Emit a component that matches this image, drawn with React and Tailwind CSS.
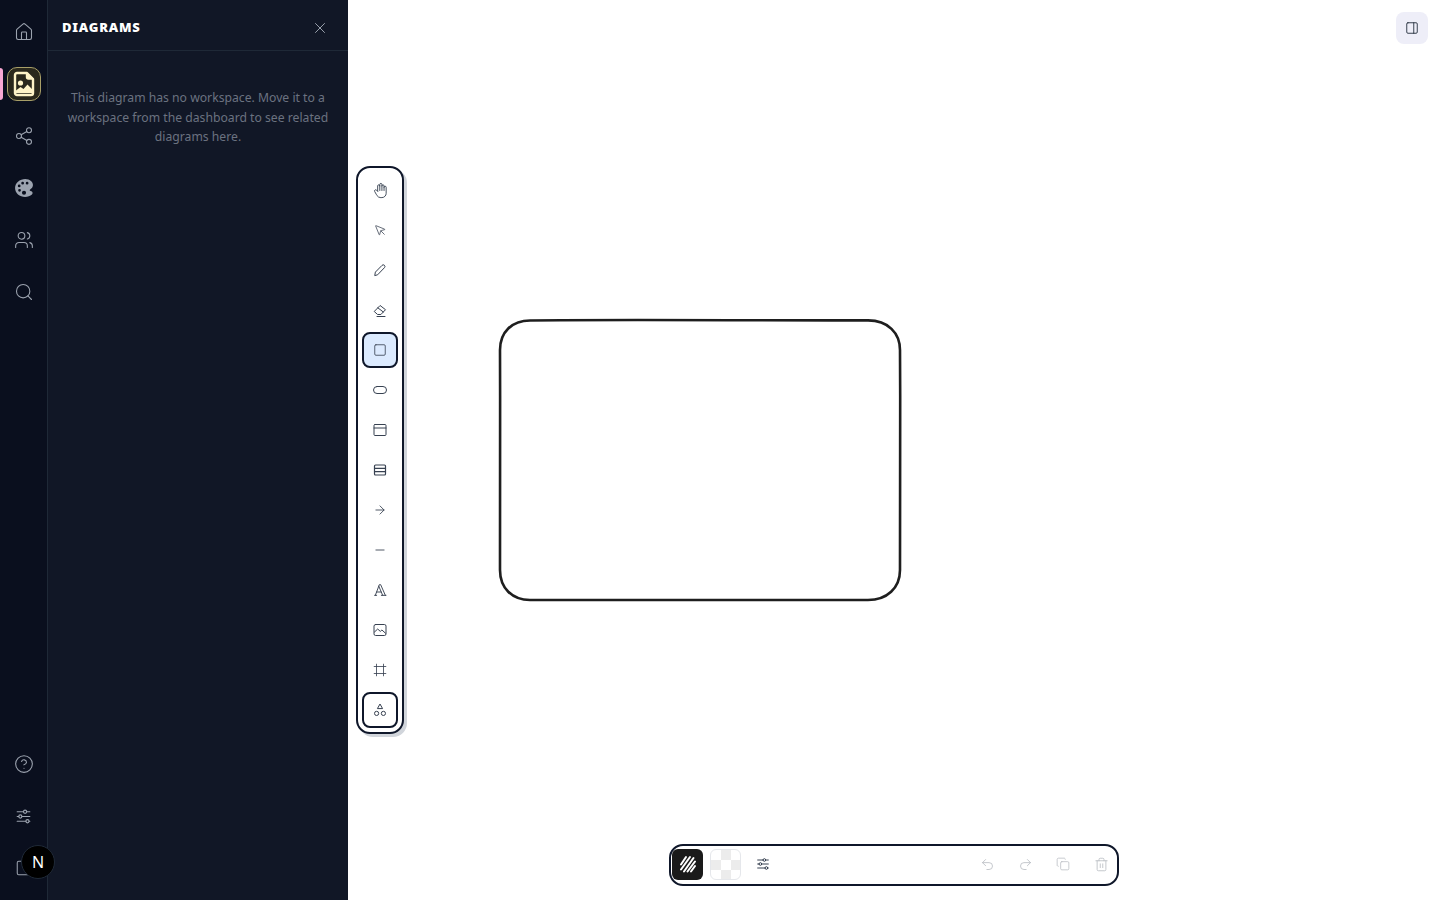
import React from "react";
import { Home, Share2, Users, Search, CircleHelp, X, PanelRight, MousePointer, Square, ArrowRight, Minus, Frame, Undo2, Redo2, Copy, Trash2 } from "lucide-react";
import { IoColorPalette } from "react-icons/io5";
import { TbTypography, TbHandStop, TbAdjustmentsHorizontal } from "react-icons/tb";

function RailButton({ children }) {
  return <div className="flex h-[52px] w-full items-center justify-center text-[#9ca3af]">{children}</div>;
}

function FileIcon() {
  return (
    <svg width="22" height="26" viewBox="0 0 22 26">
      <path d="M4 2h10l6 6v14a2 2 0 0 1-2 2H4a2 2 0 0 1-2-2V4a2 2 0 0 1 2-2z" fill="#2a281c" stroke="#fef3c7" strokeWidth="2.4" strokeLinejoin="round" />
      <path d="M13.5 2v4a2 2 0 0 0 2 2H20z" fill="#fef3c7" stroke="#fef3c7" strokeWidth="1.4" strokeLinejoin="round" />
      <circle cx="7.5" cy="12" r="2.6" fill="#fef3c7" />
      <path d="M3 22v-2.5l4.5-3.5 3 2 4-4.5 4.5 4.5V22z" fill="#fef3c7" />
    </svg>
  );
}

const s = { width: 16, height: 16, viewBox: "0 0 16 16", fill: "none", stroke: "currentColor", strokeWidth: 1, strokeLinejoin: "round", strokeLinecap: "round" };

function PencilIcon() {
  return (
    <svg {...s}>
      <path d="M2.8 13.2l.6-3.1L10 3.4a1.6 1.6 0 0 1 2.5 2.2L5.9 12.5z" />
    </svg>
  );
}
function EraserIcon() {
  return (
    <svg {...s}>
      <path d="M2.5 9.2l5.6-5.7 5.4 4.2-4.6 4.8H6z" />
      <path d="M5.8 5.8l5.5 4.2" />
      <path d="M5 14.5h8" />
    </svg>
  );
}
function Oblong() {
  return (
    <svg {...s}>
      <rect x="1.5" y="4.5" width="13" height="7" rx="3.5" />
    </svg>
  );
}
function WindowIcon() {
  return (
    <svg {...s}>
      <rect x="2" y="2.5" width="12" height="11" rx="1" />
      <path d="M2 6h12" />
    </svg>
  );
}
function RowsIcon() {
  return (
    <svg {...s} strokeWidth="1.2">
      <rect x="2.5" y="3" width="11" height="10" rx="1" />
      <path d="M2.5 6.4h11M2.5 9.7h11" />
    </svg>
  );
}
function PhotoIcon() {
  return (
    <svg {...s}>
      <rect x="2" y="2.5" width="12" height="11" rx="1.6" />
      <path d="M2.5 10l3.2-3 2.6 2.4 1.6-1.4 3.6 3.2" />
    </svg>
  );
}
function ShapesIcon() {
  return (
    <svg width="14" height="14" viewBox="0 0 14 14" fill="none" stroke="currentColor" strokeWidth="1">
      <path d="M7 1l2.6 4.6H4.4z" strokeLinejoin="round" />
      <circle cx="3.6" cy="10.4" r="2.1" />
      <circle cx="10.4" cy="10.4" r="2.1" />
    </svg>
  );
}

function Tool({ children, active, outlined }) {
  const tone = active
    ? "border-2 border-[#0f172a] bg-[#dbeafe] rounded-lg"
    : outlined
    ? "border-2 border-[#0f172a] bg-white rounded-lg"
    : "";
  return <div className={`flex h-9 w-9 items-center justify-center text-[#374151] ${tone}`}>{children}</div>;
}

const checker = {
  backgroundImage:
    "linear-gradient(45deg,#ececec 25%,transparent 25%,transparent 75%,#ececec 75%),linear-gradient(45deg,#ececec 25%,transparent 25%,transparent 75%,#ececec 75%)",
  backgroundSize: "20px 20px",
  backgroundPosition: "0 0,10px 10px",
};

export default function App() {
  return (
    <div className="flex h-[900px] w-[1440px] overflow-hidden bg-white font-['Noto_Sans',sans-serif]">
      <aside className="relative flex w-[48px] shrink-0 flex-col items-center border-r border-[#1f2937] bg-[#0a0f1e] pb-[6px] pt-[6px]">
        <RailButton><Home size={20} strokeWidth={1.3} /></RailButton>
        <div className="relative flex h-[52px] w-full items-center justify-center">
          <span className="absolute left-0 top-[10px] h-[32px] w-[3px] rounded-r bg-[#f9a8d4]" />
          <div className="flex h-[34px] w-[34px] items-center justify-center rounded-[10px] border border-[#a89f68] bg-[#2a281c]">
            <FileIcon />
          </div>
        </div>
        <RailButton><Share2 size={20} strokeWidth={1.3} /></RailButton>
        <RailButton><IoColorPalette size={22} /></RailButton>
        <RailButton><Users size={20} strokeWidth={1.3} /></RailButton>
        <RailButton><Search size={20} strokeWidth={1.3} /></RailButton>
        <div className="mt-auto flex w-full flex-col">
          <RailButton><CircleHelp size={20} strokeWidth={1.3} /></RailButton>
          <RailButton><TbAdjustmentsHorizontal size={19} strokeWidth={1.4} /></RailButton>
          <RailButton><Square size={18} strokeWidth={1.4} /></RailButton>
        </div>
        <div className="absolute left-[21px] top-[845px] z-10 flex h-[34px] w-[34px] items-center justify-center rounded-full border border-[#1f2937] bg-black text-[16px] font-normal text-white">N</div>
      </aside>

      <section className="flex w-[300px] shrink-0 flex-col bg-[#111726]">
        <header className="flex h-[51px] items-center justify-between border-b border-[#1f2937] pl-[14px] pr-[19px] pt-[5px]">
          <h2 className="text-[13px] font-black tracking-[0.06em] text-white">DIAGRAMS</h2>
          <X size={18} strokeWidth={1.3} className="text-[#9ca3af]" />
        </header>
        <p className="px-[16px] pt-[37px] text-center text-[12.2px] leading-[19.5px] text-[#6b7280]">
          This diagram has no workspace. Move it to a workspace from the dashboard to see related diagrams here.
        </p>
      </section>

      <main className="relative flex-1 bg-white">
        <div className="absolute right-[12px] top-[12px] flex h-8 w-8 items-center justify-center rounded-lg bg-[#eeeef8] text-[#1f2937]">
          <PanelRight size={14} strokeWidth={1.5} />
        </div>

        <svg className="absolute left-[148px] top-[316px]" width="408" height="288" viewBox="0 0 408 288" fill="none">
          <path d="M34 4.5C120 3.4 280 4.6 372 4.4C392 4.4 404 17 404 34C404.6 110 403.6 190 404 254C404 272 391 284 372 284C280 283.6 120 284.6 34 284C16 284 4 272 4 254C3.6 190 4.4 110 4 34C4 16 16 4.6 34 4.5Z" stroke="#1e1e1e" strokeWidth="2.6" />
        </svg>

        <div className="absolute left-[8px] top-[166px] flex h-[568px] w-[48px] flex-col items-center gap-1 rounded-[14px] border-2 border-[#0f172a] bg-white p-1 shadow-[3px_3px_0_#d1d5db]">
          <Tool><TbHandStop size={17} strokeWidth={1.3} /></Tool>
          <Tool><MousePointer size={13} strokeWidth={1.4} /></Tool>
          <Tool><PencilIcon /></Tool>
          <Tool><EraserIcon /></Tool>
          <Tool active><Square size={14} strokeWidth={1.4} /></Tool>
          <Tool><Oblong /></Tool>
          <Tool><WindowIcon /></Tool>
          <Tool><RowsIcon /></Tool>
          <Tool><ArrowRight size={14} strokeWidth={1.5} /></Tool>
          <Tool><Minus size={14} strokeWidth={1.5} /></Tool>
          <Tool><TbTypography size={16} strokeWidth={1.4} /></Tool>
          <Tool><PhotoIcon /></Tool>
          <Tool><Frame size={14} strokeWidth={1.4} /></Tool>
          <Tool outlined><ShapesIcon /></Tool>
        </div>

        <div className="absolute left-[321px] top-[844px] flex h-[42px] w-[450px] items-center rounded-[14px] border-2 border-[#0f172a] bg-white pb-[2px] pl-[1px]">
          <div className="flex h-[31px] w-[31px] items-center justify-center rounded-md bg-[#1a1a1a]">
            <svg width="20" height="20" viewBox="0 0 20 20" fill="none" stroke="white" strokeWidth="2" strokeLinecap="round">
              <path d="M3 10.5L8 3M3 15.5L12 3M6 17.5L15.5 4M9.5 17.5L17 7.5M13 17.5L17 12" />
            </svg>
          </div>
          <div className="ml-[7px] h-[31px] w-[31px] rounded-md border border-[#e5e7eb] bg-white" style={checker} />
          <div className="ml-[3px] flex h-[36px] w-[38px] items-center justify-center text-[#374151]">
            <TbAdjustmentsHorizontal size={16} strokeWidth={1.5} />
          </div>
          <div className="ml-auto flex items-center gap-[6px] text-[#b8bbc1]">
            <div className="flex h-[36px] w-[32px] items-center justify-center"><Undo2 size={15} strokeWidth={1.3} /></div>
            <div className="flex h-[36px] w-[32px] items-center justify-center"><Redo2 size={15} strokeWidth={1.3} /></div>
            <div className="flex h-[36px] w-[32px] items-center justify-center"><Copy size={14} strokeWidth={1.3} /></div>
            <div className="flex h-[36px] w-[32px] items-center justify-center"><Trash2 size={15} strokeWidth={1.3} /></div>
          </div>
        </div>
      </main>
    </div>
  );
}
